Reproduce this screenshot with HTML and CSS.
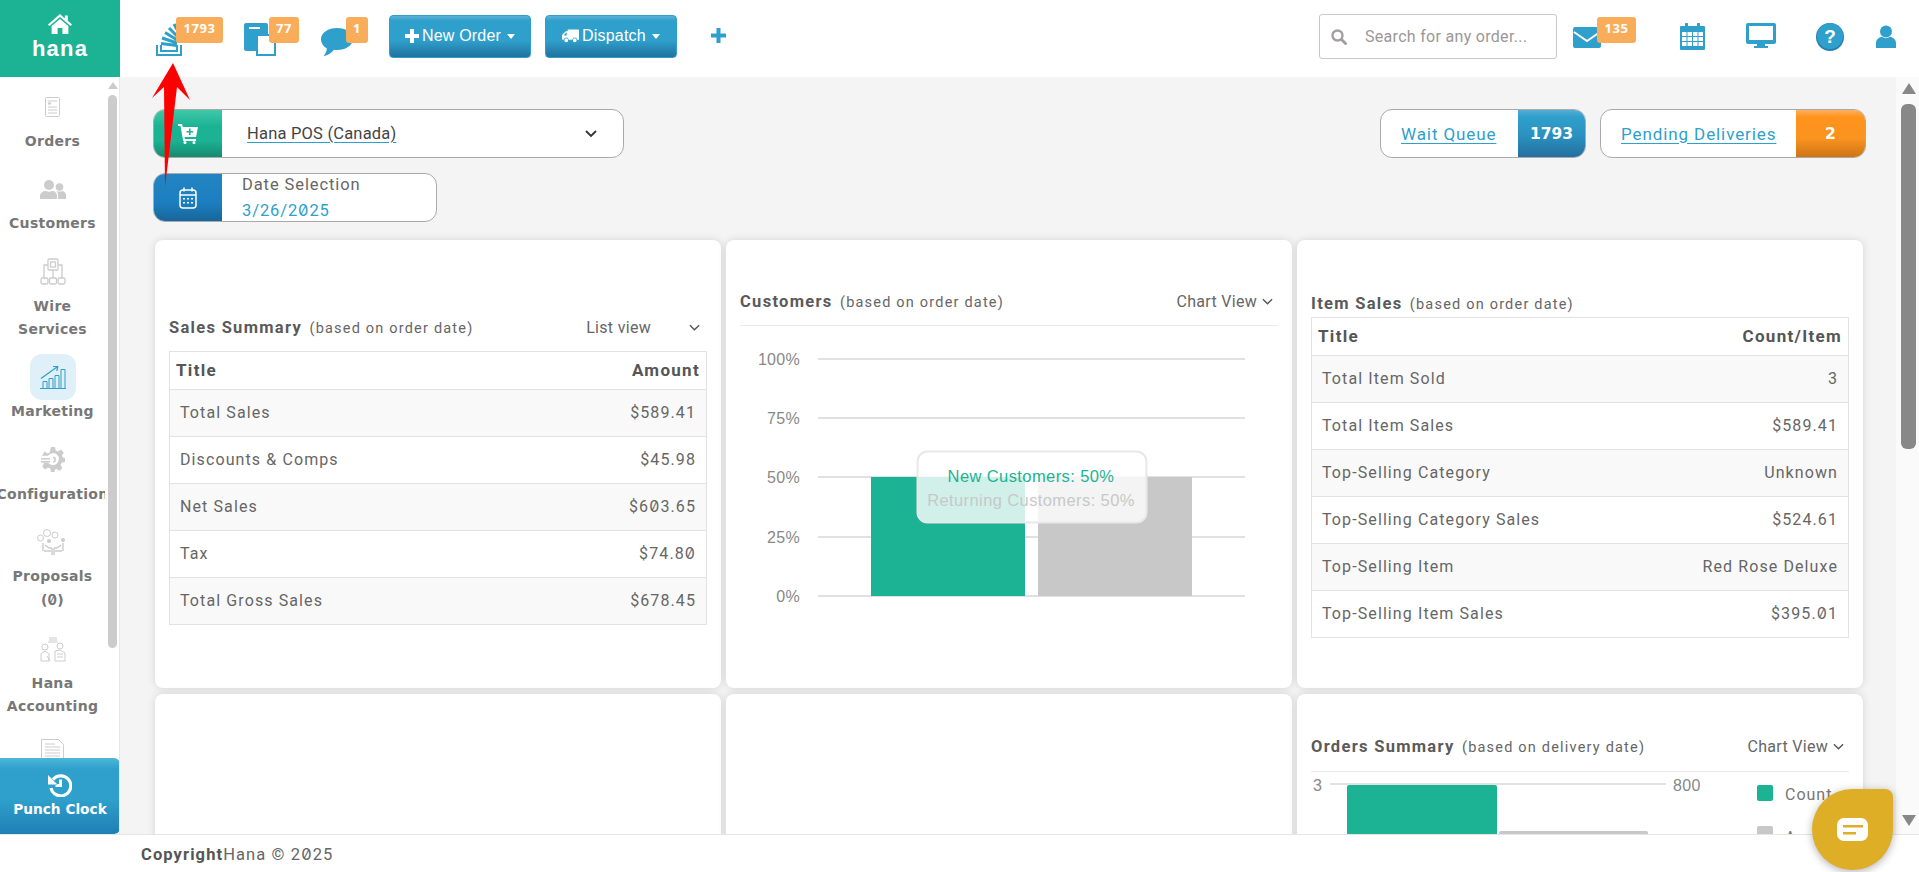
FILE: index.html
```html
<!DOCTYPE html>
<html lang="en">
<head>
<meta charset="utf-8">
<title>Hana POS Dashboard</title>
<link rel="stylesheet" href="styles.css">
</head>
<body>
<div class="app">
  <header class="topbar">
    <a class="logo">
      <svg class="logo-home" viewBox="0 0 24 20" width="24" height="20"><path fill="#fff" d="M12 0 0 10.4l1.4 1.6L12 3l10.6 9 1.4-1.6-4.2-3.6V1.4h-3v3.2zM12 5 3.6 12.1V20h6v-6h4.8v6h6v-7.9z"/></svg>
      <span>hana</span>
    </a>
    <div class="quick">
      <a class="qi qi-stack">
        <svg viewBox="0 0 26 33" width="26" height="33"><g fill="none" stroke="#2f9fcb"><path stroke-width="2" d="M1 22v10h24v-10"/><path stroke-width="2" d="M5 22v6h16v-6"/><path stroke-width="3" d="M5 20.500l16 2M6 15l15 5M9 9.500l13 8M13 5l10 10M18 1l6 11"/></g></svg>
        <b class="badge">1793</b>
      </a>
      <a class="qi qi-pages">
        <svg viewBox="0 0 32 33" width="32" height="33"><path fill="#2f9fcb" d="M2 0h20a2 2 0 0 1 2 2v9H13v17H2a2 2 0 0 1-2-2V2a2 2 0 0 1 2-2z"/><path fill="#fff" d="M5 4h11v2H5z"/><path fill="#fff" stroke="#2f9fcb" stroke-width="2" d="M13 12h18v20H13z"/></svg>
        <b class="badge">77</b>
      </a>
      <a class="qi qi-chat">
        <svg viewBox="0 0 32 28" width="32" height="28"><path fill="#2f9fcb" d="M16 0c8.800 0 16 4.800 16 11s-7.200 11-16 11c-1 0-2 0-3-.2C11 24.500 7 27.500 2.500 28c1.800-2 3-4.200 3.400-7.600C2.300 18.400 0 15 0 11 0 4.800 7.200 0 16 0z"/></svg>
        <b class="badge">1</b>
      </a>
      <a class="btn btn-order"><svg viewBox="0 0 14 14" width="14" height="14"><path fill="#fff" d="M5 0h4v5h5v4H9v5H5V9H0V5h5z"/></svg>New Order<i class="caret"></i></a>
      <a class="btn btn-dispatch"><svg viewBox="0 0 18 14" width="17" height="14"><path fill="#fff" d="M6 0h11a1 1 0 0 1 1 1v10h-2a2.500 2.500 0 0 0-5 0H7a2.500 2.500 0 0 0-5 0H1a1 1 0 0 1-1-1V6l4-4h2zM1.800 6.500H5V3.400H4.500zM4.500 9.500a2 2 0 1 1 0 4 2 2 0 0 1 0-4zm9 0a2 2 0 1 1 0 4 2 2 0 0 1 0-4z"/></svg>Dispatch<i class="caret"></i></a>
      <a class="add"><svg viewBox="0 0 15 15" width="15" height="15"><path fill="#2f9fcb" d="M5.500 0h4v5.500H15v4H9.500V15h-4V9.500H0v-4h5.500z"/></svg></a>
    </div>
    <div class="tools">
      <label class="search">
        <svg viewBox="0 0 16 16" width="16" height="16"><circle cx="6.500" cy="6.500" r="5" fill="none" stroke="#a39f9f" stroke-width="2.400"/><path stroke="#a39f9f" stroke-width="3" stroke-linecap="round" d="m10.500 10.500 4 4"/></svg>
        <span>Search for any order...</span>
      </label>
      <a class="qi qi-mail">
        <svg viewBox="0 0 28 21" width="28" height="21"><path fill="#2f9fcb" d="M2 0h24a2 2 0 0 1 2 2v17a2 2 0 0 1-2 2H2a2 2 0 0 1-2-2V2a2 2 0 0 1 2-2z"/><path fill="none" stroke="#fff" stroke-width="2" d="m1 5 13 9 13-9"/></svg>
        <b class="badge">135</b>
      </a>
      <svg class="ti ti-cal" viewBox="0 0 25 27" width="25" height="27"><path fill="#2f9fcb" d="M1 3h4V1a1.500 1.500 0 0 1 3 0v2h9V1a1.500 1.500 0 0 1 3 0v2h4a1 1 0 0 1 1 1v22a1 1 0 0 1-1 1H1a1 1 0 0 1-1-1V4a1 1 0 0 1 1-1z"/><path fill="#fff" d="M2 9h4.500v4H2zm5.500 0h4.500v4H7.500zm5.500 0h4.500v4H13zm5.500 0H23v4h-4.500zM2 14h4.500v4H2zm5.500 0h4.500v4H7.500zm5.500 0h4.500v4H13zm5.500 0H23v4h-4.500zM2 19h4.500v4H2zm5.500 0h4.500v4H7.500zm5.500 0h4.500v4H13zm5.500 0H23v4h-4.500z"/></svg>
      <svg class="ti ti-mon" viewBox="0 0 30 25" width="30" height="25"><path fill="#2f9fcb" d="M2 0h26a2 2 0 0 1 2 2v17a2 2 0 0 1-2 2h-9v2h3v2H8v-2h3v-2H2a2 2 0 0 1-2-2V2a2 2 0 0 1 2-2z"/><path fill="#fff" d="M3 3h24v14H3z"/></svg>
      <svg class="ti ti-help" viewBox="0 0 28 28" width="28" height="28"><circle cx="14" cy="14" r="14" fill="#2582b4"/><circle cx="14" cy="13" r="13" fill="#2f9fcb"/><text x="14" y="20" text-anchor="middle" class="help-q">?</text></svg>
      <svg class="ti ti-user" viewBox="0 0 20 23" width="20" height="23"><circle cx="10" cy="6.500" r="6" fill="#2f9fcb"/><path fill="#2f9fcb" d="M0 23v-5c0-3.500 3-5.500 6-6.200 2.500 1.800 5.500 1.800 8 0 3 .7 6 2.700 6 6.200v5z"/></svg>
    </div>
  </header>

  <div class="body">
    <aside class="side">
      <nav class="nav">
        <a class="nav-item"><span class="nav-icon"><svg viewBox="0 0 15 20" width="15" height="20"><g fill="none" stroke="#ccc"><rect x=".5" y=".5" width="14" height="19" rx="1"/><path d="M3 4h9M3 10h9M3 13h9M3 16h9"/></g><rect x="3" y="5.500" width="3" height="2" fill="#ccc"/></svg></span><span class="nav-label">Orders</span></a>
        <a class="nav-item"><span class="nav-icon"><svg viewBox="0 0 26 19" width="26" height="19"><circle cx="9" cy="5" r="5" fill="#ccc"/><circle cx="19.500" cy="7" r="3.800" fill="#ccc"/><path fill="#ccc" d="M0 19v-3c0-3 3-5 6-5 1.800 1 4.200 1 6 0 3 0 5 2 5 5v3zM18 19v-4c0-1.500-.6-3-1.600-4 2 .8 4.200.8 6 0 2 .6 3.600 2 3.600 4v4z"/></svg></span><span class="nav-label">Customers</span></a>
        <a class="nav-item"><span class="nav-icon"><svg viewBox="0 0 26 27" width="26" height="27"><g fill="none" stroke="#ccc" stroke-width="1.300"><rect x="8" y="1" width="10" height="11" rx="1"/><rect x="10.500" y="4" width="5" height="5"/><path d="M8 7H4v13M18 7h4v13M13 12v8"/><rect x="1" y="20" width="7" height="6" rx="1.500"/><rect x="9.500" y="20" width="7" height="6" rx="1.500"/><rect x="18" y="20" width="7" height="6" rx="1.500"/></g></svg></span><span class="nav-label">Wire<br>Services</span></a>
        <a class="nav-item"><span class="nav-icon nav-icon-active"><svg viewBox="0 0 26 24" width="26" height="24"><g fill="none" stroke="#2f9fcb" stroke-width="1"><path d="M0 23.500h26M3 23V16.500h4V23M9 23V13.500h4V23M15 23V10.500h4V23M21 23V4.500h4V23"/><path stroke-width="1.200" d="M1 13.500 17 2M13 1.500l4.800 0-1 4.500"/></g></svg></span><span class="nav-label">Marketing</span></a>
        <a class="nav-item"><span class="nav-icon"><svg viewBox="0 0 24 25" width="24" height="25"><path fill="#ccc" d="M10 0h4l.7 3.400 2.300 1 3-1.800 2.800 2.800-1.800 3 .9 2.200 2.100.4v4l-3.400.7-1 2.300 1.800 3-2.800 2.800-3-1.800-2.200.9L14 25h-4l-.7-3.400-2.300-1-3 1.800-2.800-2.800 1.800-3-.9-1.100H7a6 6 0 1 0 0-6.800H2l-.4-.9L0 10V9h1.800l-.2-1L3.400 4.600l3 1.800 2.300-1z"/><path fill="#ccc" d="M0 11h9v1.500H0zM0 14h9v1.500H0zM12 9.500a3 3 0 1 1 0 6v-1.500a1.500 1.500 0 0 0 0-3z"/></svg></span><span class="nav-label">Configuration</span></a>
        <a class="nav-item"><span class="nav-icon"><svg viewBox="0 0 32 27" width="32" height="27"><g fill="none" stroke="#ccc" stroke-width="1"><circle cx="3.500" cy="9" r="3"/><circle cx="10" cy="4" r="3.500"/><circle cx="18" cy="6" r="3"/><path stroke-width="1.400" d="M6 22V14M8 16l4 3h3M26 22V14M24 16l-4 3h-3M7 22h7M18 22h7M15 19v7M17 19v7"/></g><circle cx="12" cy="12" r="2" fill="#ccc"/><circle cx="26" cy="11" r="2" fill="#ccc"/></svg></span><span class="nav-label">Proposals<br>(<span class="zero">0</span>)</span></a>
        <a class="nav-item"><span class="nav-icon"><svg viewBox="0 0 26 26" width="26" height="26"><g fill="none" stroke="#ccc" stroke-width="1"><path d="M9 2h8M9 4h8M8 6h10"/><circle cx="5" cy="11" r="3"/><circle cx="20" cy="10" r="3"/><path d="M1 25v-7l4-3 4 3v7zM15 25v-10l5-1 5 3v8zM7 20l3 5M17 18h6M17 21h6"/></g></svg></span><span class="nav-label">Hana<br>Accounting</span></a>
        <a class="nav-item"><span class="nav-icon"><svg viewBox="0 0 23 30" width="23" height="30"><g fill="none" stroke="#ccc"><path d="M.5.500h17l5 5v24H.5z"/><path d="M4 5h10M4 8h15M4 11h15M4 14h15M4 17h15"/><circle cx="7" cy="22" r="3"/><path d="M13 21h6M13 24h6"/></g></svg></span><span class="nav-label">Reports</span></a>
      </nav>
      <div class="side-scroll"><i class="side-up"></i><i class="side-thumb"></i></div>
      <a class="punch">
        <svg viewBox="0 0 24 24" width="24" height="24"><path fill="none" stroke="#fff" stroke-width="3.200" d="M5 6.500A10 10 0 1 1 3 15"/><path fill="#fff" d="M0 2v9.500h9.500zM11 6.500h3V14H7.500v-3H11z"/></svg>
        <span>Punch Clock</span>
      </a>
    </aside>

    <main class="main">
      <div class="filters">
        <div class="filter-col">
          <div class="pill pill-select">
            <span class="pill-icon green"><svg viewBox="0 0 20 20" width="20" height="20"><path fill="#fff" d="M0 0h4l.8 3H20l-2 10H6.500l.4 2H18v2H5.200L2.500 2H0z"/><circle cx="7" cy="18.500" r="1.500" fill="#fff"/><circle cx="16" cy="18.500" r="1.500" fill="#fff"/><path fill="#1bb394" d="M11 4.500h1.600v2.500H15v1.500h-2.400V11H11V8.500H8.500V7H11z"/></svg></span>
            <a class="pill-link">Hana POS (Canada)</a>
            <svg class="chev" viewBox="0 0 12 7" width="12" height="7"><path fill="none" stroke="#333" stroke-width="1.800" d="m1 1 5 5 5-5"/></svg>
          </div>
          <div class="pill pill-date">
            <span class="pill-icon blue"><svg viewBox="0 0 18 22" width="18" height="22"><g fill="none" stroke="#fff" stroke-width="1.500"><rect x="1" y="3" width="16" height="18" rx="3"/><path d="M1 8h16M5 .5v4M13 .500v4"/></g><path fill="#fff" d="M4 11h2v1.500H4zm4 0h2v1.500H8zm4 0h2v1.500h-2zM4 15h2v1.500H4zm4 0h2v1.500H8zm4 0h2v1.500h-2z"/></svg></span>
            <div class="date-text"><span>Date Selection</span><b>3/26/2<span class="zero">0</span>25</b></div>
          </div>
        </div>
        <div class="stat-row">
          <div class="pill pill-wait"><a class="stat-link">Wait Queue</a><b class="stat-num blue">1793</b></div>
          <div class="pill pill-pend"><a class="stat-link">Pending Deliveries</a><b class="stat-num orange">2</b></div>
        </div>
      </div>

      <div class="cards">
        <section class="card card-sales">
          <div class="card-head">
            <h3>Sales Summary <small>(based on order date)</small></h3>
            <span class="view view-list">List view<svg viewBox="0 0 12 7" width="11" height="7"><path fill="none" stroke="#555" stroke-width="1.500" d="m1 1 5 5 5-5"/></svg></span>
          </div>
          <table class="dt">
            <thead><tr><th>Title</th><th>Amount</th></tr></thead>
            <tbody>
              <tr><td>Total Sales</td><td>$589.41</td></tr>
              <tr><td>Discounts &amp; Comps</td><td>$45.98</td></tr>
              <tr><td>Net Sales</td><td>$6<span class="zero">0</span>3.65</td></tr>
              <tr><td>Tax</td><td>$74.8<span class="zero">0</span></td></tr>
              <tr><td>Total Gross Sales</td><td>$678.45</td></tr>
            </tbody>
          </table>
        </section>

        <section class="card card-cust">
          <div class="card-head ruled">
            <h3>Customers <small>(based on order date)</small></h3>
            <span class="view">Chart View<svg viewBox="0 0 12 7" width="11" height="7"><path fill="none" stroke="#555" stroke-width="1.500" d="m1 1 5 5 5-5"/></svg></span>
          </div>
          <svg class="chart" viewBox="740 326 538 290" width="538" height="290">
            <g class="grid"><path d="M818 359h427M818 418h427M818 477h427M818 537h427M818 596h427"/></g>
            <g class="axis" text-anchor="end">
              <text x="800" y="365">100%</text><text x="800" y="424">75%</text><text x="800" y="483">50%</text><text x="800" y="543">25%</text><text x="800" y="602">0%</text>
            </g>
            <rect x="871" y="477" width="154" height="119" fill="#1bb394"/>
            <rect x="1038" y="477" width="154" height="119" fill="#c8c8c8"/>
            <rect x="917.500" y="451.500" width="229" height="71" rx="10" fill="#fff" fill-opacity=".8" stroke="#e8e8e8" stroke-width="2"/>
            <g class="tip" text-anchor="middle">
              <text x="1031" y="482" fill="#1bb394">New Customers: 50%</text>
              <text x="1031" y="506" fill="#c8c8c8">Returning Customers: 50%</text>
            </g>
          </svg>
        </section>

        <section class="card card-item">
          <div class="card-head">
            <h3>Item Sales <small>(based on order date)</small></h3>
          </div>
          <table class="dt">
            <thead><tr><th>Title</th><th>Count/Item</th></tr></thead>
            <tbody>
              <tr><td>Total Item Sold</td><td>3</td></tr>
              <tr><td>Total Item Sales</td><td>$589.41</td></tr>
              <tr><td>Top-Selling Category</td><td>Unknown</td></tr>
              <tr><td>Top-Selling Category Sales</td><td>$524.61</td></tr>
              <tr><td>Top-Selling Item</td><td>Red Rose Deluxe</td></tr>
              <tr><td>Top-Selling Item Sales</td><td>$395.<span class="zero">0</span>1</td></tr>
            </tbody>
          </table>
        </section>

        <section class="card card-empty"></section>
        <section class="card card-empty"></section>

        <section class="card card-orders">
          <div class="card-head ruled">
            <h3>Orders Summary <small>(based on delivery date)</small></h3>
            <span class="view">Chart View<svg viewBox="0 0 12 7" width="11" height="7"><path fill="none" stroke="#555" stroke-width="1.500" d="m1 1 5 5 5-5"/></svg></span>
          </div>
          <svg class="chart" viewBox="1311 772 538 100" width="538" height="100">
            <g class="grid"><path d="M1330 784h336"/></g>
            <g class="axis"><text x="1313" y="791">3</text><text x="1673" y="791">800</text></g>
            <rect x="1347" y="785" width="150" height="88" rx="2" fill="#1bb394"/>
            <rect x="1499" y="831" width="149" height="42" rx="2" fill="#c8c8c8"/>
            <rect x="1757" y="785" width="16" height="16" rx="2" fill="#1bb394"/>
            <rect x="1757" y="826" width="16" height="16" rx="2" fill="#c8c8c8"/>
            <g class="legend"><text x="1785" y="800">Count</text><text x="1785" y="843">Amount</text></g>
          </svg>
        </section>
      </div>
    </main>

    <div class="page-scroll"><i class="up"></i><i class="thumb"></i><i class="down"></i></div>
  </div>

  <footer class="footer"><b>Copyright</b>Hana © 2<span class="zero">0</span>25</footer>

  <svg class="arrow" viewBox="0 0 40 126" width="40" height="126"><path fill="#f00" d="M21 0 38 37 25 24 13 124 12 24 0 35z"/></svg>

  <a class="chat-bubble">
    <svg viewBox="0 0 31 23" width="31" height="23"><rect width="31" height="23" rx="7" fill="#fff"/><path fill="#deae26" d="M6 7h20v2.500H6zM6 14h13v2.500H6z"/></svg>
  </a>
</div>
</body>
</html>
```

FILE: styles.css
```css
* { box-sizing: border-box; }
html, body { margin: 0; height: 100%; overflow: hidden; }
body { font-family: Roboto, "Liberation Sans", sans-serif; color: #555; background: #fff; }
a { color: inherit; text-decoration: none; }
.zero { font-family: Inter, Roboto, sans-serif; font-variant-numeric: slashed-zero; font-feature-settings: "zero"; }

.app { position: relative; display: flex; flex-direction: column; height: 872px; }

/* top bar */
.topbar { display: flex; align-items: stretch; height: 77px; flex: none; background: #fff; }
.logo { width: 120px; flex: none; background: #1bb394; color: #fff; display: flex; flex-direction: column; align-items: center; padding-top: 14px; }
.logo span { font: 700 22px/28px "Liberation Sans", sans-serif; letter-spacing: 1.200px; margin-top: 1px; }
.quick { display: flex; align-items: flex-start; padding-left: 36px; padding-top: 15px; }
.qi { position: relative; display: block; }
.qi svg { display: block; }
.badge { position: absolute; top: 0; height: 26px; background: #f9ad5a; border-radius: 3px; color: #fff; font: 700 13px/22px "Open Sans", sans-serif; letter-spacing: .6px; text-align: center; }
.qi-stack { width: 26px; height: 33px; margin-top: 8px; }
.qi-stack .badge { left: 20px; top: -6px; width: 47px; }
.qi-pages { width: 32px; height: 33px; margin-top: 8px; margin-left: 62px; }
.qi-pages .badge { left: 25px; top: -6px; width: 30px; }
.qi-chat { width: 32px; height: 28px; margin-top: 13px; margin-left: 45px; }
.qi-chat .badge { left: 25px; top: -11px; width: 22px; }
.btn { height: 43px; display: flex; align-items: center; justify-content: center; gap: 3px; padding-bottom: 2px; border: 1px solid #2f9fcb; border-radius: 4px; color: #fff; font: 16px "Liberation Sans", sans-serif; letter-spacing: .2px; background: linear-gradient(#5cb3d6 0, #2f9fcb 12%, #2f9fcb 60%, #22719f 100%); }
.btn-order { width: 142px; margin-left: 36px; }
.btn-dispatch { width: 132px; margin-left: 14px; }
.caret { width: 0; height: 0; border: 4px solid transparent; border-top: 5px solid #fff; border-bottom: 0; margin-left: 3px; margin-top: 2px; }
.add { margin-left: 34px; margin-top: 13px; display: block; }
.add svg { display: block; }

.tools { margin-left: auto; display: flex; align-items: flex-start; padding-top: 14px; padding-right: 23px; }
.search { width: 238px; height: 45px; border: 1px solid #c8c8c8; border-radius: 3px; display: flex; align-items: center; padding-left: 11px; gap: 18px; color: #9c9797; font-size: 16px; letter-spacing: .3px; }
.qi-mail { width: 28px; height: 21px; margin-left: 16px; margin-top: 13px; }
.qi-mail .badge { left: 24px; top: -10px; width: 39px; }
.ti { display: block; flex: none; }
.ti-cal { margin-left: 79px; margin-top: 9px; }
.ti-mon { margin-left: 41px; margin-top: 9px; }
.ti-help { margin-left: 40px; margin-top: 9px; }
.ti-user { margin-left: 32px; margin-top: 11px; }
.help-q { font: 700 19px "Liberation Sans", sans-serif; fill: #fff; }

/* body */
.body { flex: 1; display: flex; min-height: 0; position: relative; }

/* side */
.side { position: relative; width: 120px; flex: none; display: flex; background: #fff; border-right: 1px solid #e8e8e8; overflow: hidden; }
.nav { width: 105px; flex: none; display: flex; flex-direction: column; gap: 13.5px; padding-top: 6.5px; overflow: hidden; }
.nav-item { display: flex; flex-direction: column; align-items: center; flex: none; }
.nav-icon { width: 46px; height: 46px; flex: none; display: flex; align-items: center; justify-content: center; border-radius: 12px; }
.nav-icon-active { background: #dff0f9; }
.nav-label { font: 700 14px/23px "DejaVu Sans", sans-serif; letter-spacing: .3px; color: #777; text-align: center; white-space: nowrap; }
.side-scroll { position: relative; width: 9px; margin-left: 3px; }
.side-up { position: absolute; top: 5px; left: 0; border: 5px solid transparent; border-top: 0; border-bottom: 7px solid #ccc; }
.side-thumb { position: absolute; top: 18px; left: 0; width: 9px; height: 553px; background: #ccc; border-radius: 5px; }
.punch { position: absolute; left: 0; bottom: 0; width: 120px; height: 76px; border-radius: 0 6px 6px 0; background: linear-gradient(#4db7d8 0, #2f9fcb 15%, #2f9fcb 55%, #1f7fb5 100%); color: #fff; display: flex; flex-direction: column; align-items: center; padding-top: 15px; }
.punch svg { display: block; }
.punch span { font: 700 13.700px/22px "DejaVu Sans", sans-serif; margin-top: 1px; white-space: nowrap; }

/* main */
.main { flex: 1; min-width: 0; background: #f4f4f4; padding: 32px 0 0 33px; overflow: hidden; }
.filters { display: flex; justify-content: space-between; align-items: flex-start; padding-right: 30px; }
.filter-col { display: flex; flex-direction: column; gap: 15px; }
.pill { display: flex; align-items: center; height: 49px; background: #fff; border: 1px solid #aaa; border-radius: 12px; overflow: hidden; }
.pill-icon { width: 68px; align-self: stretch; display: flex; align-items: center; justify-content: center; flex: none; }
.green { background: linear-gradient(#3fc8a8, #1bb394 35%, #1bb394 65%, #17896f); }
.blue { background: linear-gradient(#55aed3, #2f9fcb 15%, #2b91c0 55%, #236f9e); }
.pill-date .blue { background: linear-gradient(#2484c2, #1c7fc0 60%, #17669a); }
.orange { background: linear-gradient(#ffb060, #ff931e 15%, #fb931f 60%, #cc7616); }
.pill-select { width: 471px; }
.pill-link { margin-left: 25px; font-size: 16.500px; color: #444; letter-spacing: .2px; text-decoration: underline; text-decoration-color: #2f9fcb; text-underline-offset: 3px; }
.chev { margin-left: auto; margin-right: 26px; }
.pill-date { width: 284px; }
.date-text { margin-left: 20px; display: flex; flex-direction: column; gap: 3px; font-size: 16.500px; line-height: 22px; letter-spacing: .9px; color: #666; white-space: nowrap; }
.date-text b { font-weight: 400; color: #2f9fcb; }
.stat-row { display: flex; gap: 14px; }
.stat-link { flex: 1; padding-left: 20px; font-size: 17px; letter-spacing: .9px; color: #2f9fcb; text-decoration: underline; text-underline-offset: 3px; white-space: nowrap; }
.stat-num { align-self: stretch; display: flex; align-items: center; justify-content: center; color: #fff; font: 700 15.500px "DejaVu Sans", sans-serif; }
.pill-wait { width: 206px; }
.pill-wait .stat-num { width: 67px; }
.pill-pend { width: 266px; }
.pill-pend .stat-num { width: 69px; }

/* cards */
.cards { display: grid; grid-template-columns: repeat(3, 566px); grid-template-rows: 448px 300px; gap: 6px 5px; margin: 18px 0 0 2px; }
.card { background: #fff; border-radius: 8px; box-shadow: 0 0 9px rgba(0, 0, 0, .13); padding: 0 14px; }
.card-head { display: flex; align-items: center; justify-content: space-between; height: 24px; }
.card-sales { padding-top: 75px; }
.card-sales .card-head { margin-bottom: 12px; }
.card-cust { padding-top: 50px; }
.card-item { padding-top: 51px; }
.card-item .card-head { margin-bottom: 2px; }
.card-orders { padding-top: 41px; }
.card-orders .ruled { height: 37px; padding-bottom: 13px; }
.ruled { height: 36px; padding-bottom: 12px; border-bottom: 1px solid #eaeaea; box-sizing: border-box; }
h3 { margin: 0; font-size: 16.500px; font-weight: 700; letter-spacing: 1.300px; color: #5a5a5a; white-space: nowrap; }
h3 small { font-size: 14.500px; font-weight: 400; letter-spacing: 1.200px; color: #666; margin-left: 2px; }
.view { display: flex; align-items: center; gap: 5px; font-size: 16px; letter-spacing: .3px; color: #666; padding-right: 5px; }
.view-list { gap: 38px; padding-right: 2px; margin-right: 5px; }
.dt { width: 100%; border-collapse: collapse; font-size: 16px; letter-spacing: 1.100px; color: #666; }
.dt th, .dt td { border: 1px solid #e2e2e2; border-width: 1px 0; text-align: left; padding: 0; }
.dt { border-left: 1px solid #e2e2e2; border-right: 1px solid #e2e2e2; }
.dt th { height: 38px; padding: 0 6px 2px; font-size: 17px; letter-spacing: 1.300px; font-weight: 700; color: #555; }
.dt td { height: 47px; padding: 0 10px 2px; }
.dt tr > :last-child { text-align: right; }
.dt tbody tr:nth-child(odd) { background: #f9f9f9; }
.chart { display: block; }
.grid path { fill: none; stroke: #d8d8d8; stroke-width: 1.500; }
.axis text { font: 16px "Liberation Sans", sans-serif; letter-spacing: .3px; fill: #888; }
.tip text { font: 16.500px "Liberation Sans", sans-serif; letter-spacing: .4px; }
.legend text { font: 16px Roboto, sans-serif; letter-spacing: 1px; fill: #777; }

/* page scrollbar */
.page-scroll { position: relative; width: 23px; flex: none; background: #fafafa; }
.thumb { position: absolute; left: 5px; top: 27px; width: 15px; height: 345px; background: #888; border-radius: 6px; }
.up { position: absolute; left: 6px; top: 6px; border: 7px solid transparent; border-top: 0; border-bottom: 11px solid #888; }
.down { position: absolute; left: 6px; bottom: 8px; border: 7px solid transparent; border-bottom: 0; border-top: 11px solid #888; }

/* footer */
.footer { position: relative; flex: none; height: 38px; background: #fff; border-top: 1px solid #e5e5e5; padding: 9px 0 0 141px; font-size: 16.500px; line-height: 20px; letter-spacing: 1.100px; color: #666; }
.footer b { color: #555; }

/* overlays */
.arrow { position: absolute; left: 152px; top: 63px; }
.chat-bubble { position: absolute; left: 1812px; top: 789px; width: 81px; height: 81px; background: #deae26; border-radius: 50% 8px 50% 50%; box-shadow: 0 2px 8px rgba(0, 0, 0, .3); display: flex; align-items: center; justify-content: center; }
.chat-bubble svg { display: block; }
```
